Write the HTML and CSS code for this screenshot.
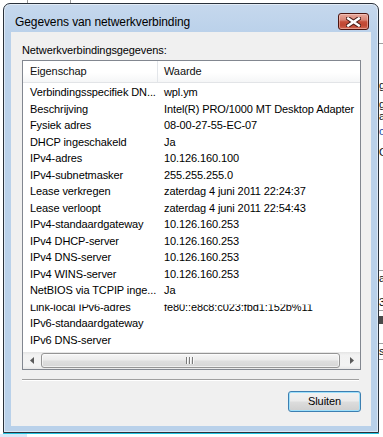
FILE: index.html
```html
<!DOCTYPE html>
<html>
<head>
<meta charset="utf-8">
<title>Gegevens van netwerkverbinding</title>
<link rel="stylesheet" href="styles.css">
</head>
<body>
<div class="desktop">
  <div class="bg-mark bg-mark-a"></div>
  <div class="bg-mark bg-mark-b"></div>
  <div class="bg-window">
    <div class="bgw-line bgw-l1"></div>
    <span class="bgw-t bgw-t1">g</span>
    <span class="bgw-t bgw-t2">g</span>
    <span class="bgw-t bgw-t3">a</span>
    <span class="bgw-t bgw-t4 blue">o</span>
    <span class="bgw-t bgw-t5">C</span>
    <div class="bgw-line bgw-l2"></div>
    <span class="bgw-t bgw-t6">a</span>
    <span class="bgw-t bgw-t7">3.</span>
    <div class="bgw-line bgw-l3"></div>
    <div class="bgw-band"></div>
    <div class="bgw-line bgw-l4"></div>
    <span class="bgw-t bgw-t8">s</span>
    <div class="bgw-line bgw-l5"></div>
  </div>
  <div class="bg-patch"></div>
  <div class="shadow-line"></div>

  <div class="dialog">
    <div class="titlebar">
      <span class="title">Gegevens van netwerkverbinding</span>
      <button class="close" aria-label="Sluiten">
        <svg width="15" height="10" viewBox="0 0 15 10">
          <path d="M2.2 1.4 L12.8 8.6 M12.8 1.4 L2.2 8.6" stroke="#4a1d18" stroke-width="4.4" stroke-linecap="square" fill="none"/>
          <path d="M2.2 1.4 L12.8 8.6 M12.8 1.4 L2.2 8.6" stroke="#ffffff" stroke-width="2.4" stroke-linecap="square" fill="none"/>
        </svg>
      </button>
    </div>
    <div class="client">
      <div class="label">Netwerkverbindingsgegevens:</div>
      <div class="listview">
        <div class="lv-header">
          <div class="hcell hcell-first">Eigenschap</div>
          <div class="hcell hcell-second">Waarde</div>
        </div>
        <div class="lv-body">
          <div class="row"><span class="c1">Verbindingsspecifiek DN...</span><span class="c2">wpl.ym</span></div>
          <div class="row"><span class="c1">Beschrijving</span><span class="c2">Intel(R) PRO/1000 MT Desktop Adapter</span></div>
          <div class="row"><span class="c1">Fysiek adres</span><span class="c2">08-00-27-55-EC-07</span></div>
          <div class="row"><span class="c1">DHCP ingeschakeld</span><span class="c2">Ja</span></div>
          <div class="row"><span class="c1">IPv4-adres</span><span class="c2">10.126.160.100</span></div>
          <div class="row"><span class="c1">IPv4-subnetmasker</span><span class="c2">255.255.255.0</span></div>
          <div class="row"><span class="c1">Lease verkregen</span><span class="c2">zaterdag 4 juni 2011 22:24:37</span></div>
          <div class="row"><span class="c1">Lease verloopt</span><span class="c2">zaterdag 4 juni 2011 22:54:43</span></div>
          <div class="row"><span class="c1">IPv4-standaardgateway</span><span class="c2">10.126.160.253</span></div>
          <div class="row"><span class="c1">IPv4 DHCP-server</span><span class="c2">10.126.160.253</span></div>
          <div class="row"><span class="c1">IPv4 DNS-server</span><span class="c2">10.126.160.253</span></div>
          <div class="row"><span class="c1">IPv4 WINS-server</span><span class="c2">10.126.160.253</span></div>
          <div class="row"><span class="c1">NetBIOS via TCPIP inge...</span><span class="c2">Ja</span></div>
          <div class="row row-clipped"><span class="c1">Link-local IPv6-adres</span><span class="c2">fe80::e8c8:c023:fbd1:152b%11</span></div>
          <div class="row"><span class="c1">IPv6-standaardgateway</span><span class="c2"></span></div>
          <div class="row"><span class="c1">IPv6 DNS-server</span><span class="c2"></span></div>
        </div>
        <div class="hscroll">
          <div class="sb-arrow">
            <svg width="4" height="7" viewBox="0 0 4 7"><path d="M4 0 L0 3.5 L4 7 Z" fill="#5a5a5a"/></svg>
          </div>
          <div class="sb-thumb">
            <svg width="9" height="7" viewBox="0 0 9 7">
              <rect x="0" y="0" width="1" height="7" fill="#7a7a7a"/><rect x="1" y="0" width="1" height="7" fill="#fafafa"/>
              <rect x="3" y="0" width="1" height="7" fill="#7a7a7a"/><rect x="4" y="0" width="1" height="7" fill="#fafafa"/>
              <rect x="6" y="0" width="1" height="7" fill="#7a7a7a"/><rect x="7" y="0" width="1" height="7" fill="#fafafa"/>
            </svg>
          </div>
          <div class="sb-arrow">
            <svg width="4" height="7" viewBox="0 0 4 7"><path d="M0 0 L4 3.5 L0 7 Z" fill="#5a5a5a"/></svg>
          </div>
        </div>
      </div>
      <div class="sep"></div>
      <div class="buttons">
        <button class="btn">Sluiten</button>
      </div>
    </div>
  </div>
</div>
</body>
</html>
```

FILE: styles.css
```css
html, body {
  margin: 0;
  padding: 0;
}

body {
  width: 383px;
  height: 437px;
  overflow: hidden;
  background: #ffffff;
  font-family: "Liberation Sans", Arial, sans-serif;
  font-size: 11px;
  color: #000000;
}

.desktop {
  position: relative;
  width: 383px;
  height: 437px;
  overflow: hidden;
  background: #ffffff;
}

/* ---- background desktop fragments ---- */
.bg-mark {
  position: absolute;
  top: 0;
  width: 1px;
  height: 3px;
  background: #9a9a9a;
}
.bg-mark-a { left: 27px; }
.bg-mark-b { left: 70px; }

.bg-window {
  position: absolute;
  left: 379px;
  top: 0;
  width: 20px;
  height: 437px;
  background: #ffffff;
}
.bgw-line {
  position: absolute;
  left: 0;
  width: 20px;
  height: 1px;
  background: #a0a0a0;
}
.bgw-l1 { top: 43px; }
.bgw-l2 { top: 270px; }
.bgw-l3 { top: 310px; }
.bgw-l4 { top: 343px; }
.bgw-l5 { top: 359px; }
.bgw-band {
  position: absolute;
  left: 0;
  top: 316px;
  width: 20px;
  height: 8px;
  background: #4a4a4a;
}
.bgw-t {
  position: absolute;
  left: 0;
  font-size: 11px;
  line-height: 11px;
  color: #111;
}
.bgw-t.blue { color: #1a3fa0; }
.bgw-t1 { top: 80px; }
.bgw-t2 { top: 99px; }
.bgw-t3 { top: 111px; }
.bgw-t4 { top: 126px; }
.bgw-t5 { top: 147px; }
.bgw-t6 { top: 273px; }
.bgw-t7 { top: 297px; }
.bgw-t8 { top: 346px; }

.bg-patch {
  position: absolute;
  left: 0;
  top: 434px;
  width: 27px;
  height: 3px;
  background: #dbe7f6;
}
.shadow-line {
  position: absolute;
  left: 3px;
  top: 433px;
  width: 376px;
  height: 1px;
  background: #22c3df;
}

/* ---- dialog ---- */
.dialog {
  position: absolute;
  left: 3px;
  top: 3px;
  width: 376px;
  height: 430px;
  box-sizing: border-box;
  border: 1px solid #29313b;
  border-radius: 7px 7px 0 0;
  background: linear-gradient(#c6d8ed, #bad1ea 30px, #b9d1ea);
  box-shadow: inset 0 0 0 1px rgba(255, 255, 255, 0.5);
  display: flex;
  flex-direction: column;
  padding: 0 7px 6px 7px;
}

.titlebar {
  height: 28px;
  flex: none;
  display: flex;
  align-items: flex-start;
  justify-content: space-between;
  padding-left: 4px;
}

.title {
  margin-top: 11px;
  font-size: 12px;
  line-height: 14px;
  letter-spacing: -0.1px;
  color: #000000;
  white-space: nowrap;
}

.close {
  margin-top: 9px;
  margin-right: 2px;
  width: 31px;
  height: 17px;
  padding: 0;
  box-sizing: border-box;
  border: 1px solid #4c1510;
  border-radius: 3px;
  background: linear-gradient(#e8a89c 0%, #d98576 40%, #c54e3a 52%, #c04632 75%, #d26b57 100%);
  box-shadow: inset 0 0 0 1px rgba(255, 220, 210, 0.45);
  display: flex;
  align-items: center;
  justify-content: center;
}

.client {
  flex: 1;
  background: #f0f0f0;
  padding: 11px 10px 0 11px;
  display: flex;
  flex-direction: column;
}

.label {
  line-height: 14px;
  height: 14px;
  margin-bottom: 3px;
  letter-spacing: -0.1px;
  white-space: nowrap;
}

/* ---- list view ---- */
.listview {
  height: 310px;
  flex: none;
  box-sizing: border-box;
  border: 1px solid #828790;
  background: #ffffff;
  display: flex;
  flex-direction: column;
  overflow: hidden;
}

.lv-header {
  height: 22px;
  flex: none;
  box-sizing: border-box;
  border-bottom: 1px solid #e2e4e7;
  background: linear-gradient(#ffffff 0%, #ffffff 55%, #f5f6f7 100%);
  display: grid;
  grid-template-columns: 135px 1fr;
}

.hcell {
  line-height: 21px;
  letter-spacing: -0.1px;
  white-space: nowrap;
  color: #101010;
}
.hcell-first {
  padding-left: 7px;
  border-right: 1px solid #e3e6ea;
}
.hcell-second {
  padding-left: 6px;
}

.lv-body {
  flex: 1;
  padding-top: 1px;
  overflow: hidden;
}

.row {
  display: grid;
  grid-template-columns: 134px 1fr;
  height: 16.5px;
  line-height: 16.5px;
  white-space: nowrap;
  letter-spacing: -0.1px;
}
.row-clipped {
  clip-path: inset(6px 0 0 0);
}
.c1 {
  padding-left: 7px;
  overflow: hidden;
}
.c2 {
  padding-left: 7px;
  overflow: hidden;
}

.hscroll {
  height: 17px;
  flex: none;
  display: flex;
  background: linear-gradient(#e4e4e4 0%, #f2f2f2 18%, #f3f3f3 80%, #e8e8e8 100%);
}
.sb-arrow {
  width: 17px;
  flex: none;
  display: flex;
  align-items: center;
  justify-content: center;
}
.sb-thumb {
  flex: 1;
  margin: 1px 3px 1px 1px;
  box-sizing: border-box;
  border: 1px solid #959595;
  border-radius: 3px;
  background: linear-gradient(#f6f6f6 0%, #ececec 45%, #dedede 55%, #d6d6d6 100%);
  box-shadow: inset 0 0 0 1px rgba(255, 255, 255, 0.6);
  display: flex;
  align-items: center;
  justify-content: center;
}

.sep {
  margin-top: 9px;
  margin-right: 2px;
  height: 0;
  border-top: 1px solid #a0a0a0;
  border-bottom: 1px solid #ffffff;
}

.buttons {
  margin-top: 10px;
  display: flex;
  justify-content: flex-end;
}

.btn {
  width: 73px;
  height: 21px;
  padding: 0;
  box-sizing: border-box;
  border: 1px solid #3c7fb1;
  border-radius: 3px;
  background: linear-gradient(#f2f2f2 0%, #ebebeb 48%, #dddddd 52%, #cfcfcf 100%);
  box-shadow: inset 0 0 0 1px #9fe0fb;
  font-family: "Liberation Sans", Arial, sans-serif;
  font-size: 11px;
  letter-spacing: -0.1px;
  color: #000000;
  line-height: 19px;
}
```
